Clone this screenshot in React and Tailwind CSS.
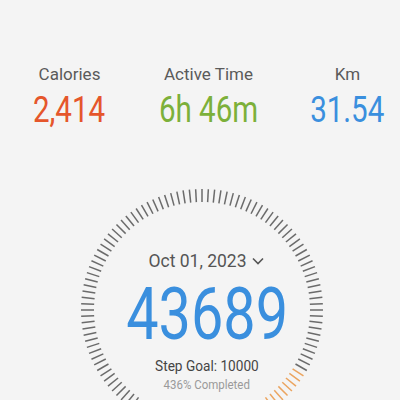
import React from 'react';

const TICKS = 120;

const StepDial = () => {
  const cx = 122;
  const cy = 122;
  const lines = [];
  for (let i = 0; i < TICKS; i++) {
    const deg = (i * 360) / TICKS;
    const a = (deg * Math.PI) / 180;
    const s = Math.sin(a);
    const c = -Math.cos(a);
    const orange = deg >= 122 && deg <= 200;
    lines.push(
      <line
        key={i}
        x1={cx + s * 108}
        y1={cy + c * 108}
        x2={cx + s * 121}
        y2={cy + c * 121}
        stroke={orange ? '#eba45f' : '#6b6b6b'}
        strokeWidth="1.5"
      />
    );
  }
  return (
    <svg className="absolute inset-0" width="244" height="244" viewBox="0 0 244 244">
      {lines}
    </svg>
  );
};

export default function App() {
  return (
    <div
      className="h-[400px] w-[400px] overflow-hidden bg-[#f4f4f4]"
      style={{ fontFamily: 'Roboto, "Noto Sans", sans-serif' }}
    >
      {/* Stats */}
      <div className="grid grid-cols-[139px_139px_139px] pt-[63px]">
        {[
          ['Calories', '2,414', 'text-[#e5562b]'],
          ['Active Time', '6h 46m', 'text-[#7cb03a]'],
          ['Km', '31.54', 'text-[#3a8fde]'],
        ].map(([label, value, color]) => (
          <div key={label} className="flex flex-col items-center">
            <span className="text-[17px] leading-[22px] text-[#5a5a5a]">{label}</span>
            <span className={`mt-[7px] inline-block origin-center scale-x-[0.82] text-[36px] leading-[36px] ${color}`}>
              {value}
            </span>
          </div>
        ))}
      </div>

      {/* Dial */}
      <div className="relative mx-auto mt-[60px] h-[244px] w-[244px] translate-x-[2px]">
        <StepDial />
        <div className="relative flex flex-col items-center pl-[10px] pt-[62px]">
          <div className="-ml-[2px] flex items-center gap-[5px] text-[17.5px] leading-[22px] text-[#555]">
            <span>Oct 01, 2023</span>
            <svg width="12" height="8" viewBox="0 0 12 8" fill="none">
              <path d="M1 1.5l5 5 5-5" stroke="#555" strokeWidth="1.6" />
            </svg>
          </div>
          <span className="mt-[15px] inline-block scale-x-[0.8] text-[72px] leading-[56px] text-[#3a8fde]">43689</span>
          <span className="mt-[14px] inline-block scale-x-[0.88] text-[15.5px] leading-[18px] text-[#444]">
            Step Goal: 10000
          </span>
          <span className="mt-[1px] inline-block scale-x-[0.85] text-[13.5px] leading-[16px] text-[#9a9a9a]">436% Completed</span>
        </div>
      </div>
    </div>
  );
}
